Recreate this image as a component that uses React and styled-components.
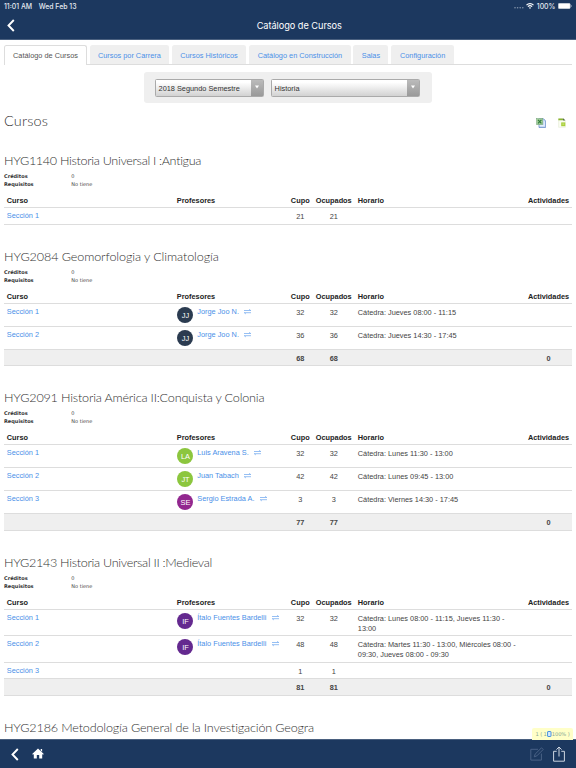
import styled, { createGlobalStyle } from 'styled-components';

const GlobalStyle = createGlobalStyle`
  * {
    box-sizing: border-box;
  }
  body {
    margin: 0;
    background: #fff;
    font-family: 'Liberation Sans', Arial, sans-serif;
    font-size: 7.35px;
    color: #444;
  }
`;

const Page = styled.div`
  width: 576px;
  height: 768px;
  display: flex;
  flex-direction: column;
  overflow: hidden;
`;

const TopBar = styled.header`
  height: 40px;
  flex: none;
  background: #1c385f;
  border-bottom: 1px solid #4a607f;
  color: #fff;
`;

const StatusBar = styled.div`
  height: 12px;
  padding: 0 4px 0 4px;
  display: flex;
  align-items: center;
  font-family: Inter, sans-serif;
  font-size: 6.9px;
  font-weight: 500;
  color: #e4e9f0;
`;

const StatusDate = styled.span`
  margin-left: 6.5px;
`;

const StatusRight = styled.div`
  margin-left: auto;
  display: flex;
  align-items: center;
  gap: 2.6px;
`;

const TitleBar = styled.div`
  height: 27px;
  display: flex;
  align-items: center;
  padding: 0 0 1px 7px;
`;

const Title = styled.h1`
  flex: 1;
  margin: 0;
  padding-left: 7.6px;
  text-align: center;
  font-family: Inter, sans-serif;
  font-size: 9.2px;
  font-weight: 400;
  letter-spacing: -0.04px;
`;

const Content = styled.main`
  flex: 1;
  min-height: 0;
  overflow: hidden;
  padding: 5px 4px 0;
`;

const Tabs = styled.nav`
  height: 20px;
  display: flex;
  gap: 2.7px;
  border-bottom: 1px solid #ddd;
`;

const Tab = styled.a`
  width: ${props => props.$width}px;
  height: ${props => (props.$active ? 20 : 19)}px;
  flex: none;
  border-radius: 2.5px 2.5px 0 0;
  border: 1px solid ${props => (props.$active ? '#ddd' : '#efefef')};
  border-bottom: 0;
  background: ${props => (props.$active ? '#fff' : '#efefef')};
  color: ${props => (props.$active ? '#555' : '#4a90e8')};
  text-align: center;
  line-height: 19px;
  white-space: nowrap;
`;

const Filters = styled.div`
  width: 288px;
  height: 31px;
  margin: 7px auto 0;
  padding: 0 11px;
  display: flex;
  align-items: center;
  gap: 7px;
  border-radius: 3px;
  background: #efefef;
`;

const Select = styled.div`
  width: ${props => props.$width}px;
  height: 18px;
  display: flex;
  align-items: stretch;
  border: 1px solid #aaa;
  border-radius: 1.5px;
  background: linear-gradient(#fff 15%, #d4d4d4 95%);
  color: #333;
  line-height: 17px;
  padding-left: 2.6px;
`;

const SelectArrow = styled.span`
  width: 12px;
  margin-left: auto;
  display: flex;
  align-items: center;
  justify-content: center;
  padding-bottom: 1px;
  background: linear-gradient(#bbb, #999);
`;

const PageHead = styled.div`
  height: 33px;
  display: flex;
  align-items: center;
  justify-content: space-between;
  padding: 2px 6px 0 0;
`;

const PageTitle = styled.h2`
  margin: 0;
  font-family: Lato, sans-serif;
  font-size: 14.5px;
  font-weight: 300;
  letter-spacing: 0.15px;
  color: #333;
`;

const Exports = styled.div`
  display: flex;
  gap: 12px;
  padding-top: 4px;
`;

const Section = styled.section`
  padding-top: 24.1px;

  &:first-of-type {
    padding-top: 17.1px;
  }
`;

const CourseTitle = styled.h3`
  height: 16px;
  margin: 0 0 2.7px;
  font-family: Lato, sans-serif;
  font-size: 12.6px;
  font-weight: 300;
  line-height: 16px;
  letter-spacing: ${props => props.$spacing}px;
  color: #333;
  white-space: nowrap;
`;

const Meta = styled.dl`
  margin: 0 0 4px;
  display: grid;
  grid-template-columns: 67.3px 1fr;
  font-family: 'DejaVu Sans', sans-serif;
  font-size: 5px;
  line-height: 8px;

  dt {
    font-weight: 700;
    color: #333;
  }
  dd {
    margin: 0;
  }
`;

const Row = styled.div`
  height: ${props => props.$height}px;
  display: grid;
  grid-template-columns: 170px 114px 24.5px 42.5px 170px 47px;
  border-bottom: 1px solid #ddd;
  background: ${props => (props.$total ? '#efefef' : 'transparent')};
  color: ${props => (props.$head ? '#222' : '#444')};
  font-weight: ${props => (props.$head || props.$total ? 700 : 400)};
  line-height: 10px;
`;

const Cell = styled.div`
  padding: ${props => props.$top ?? 4}px 2.8px 0;
  text-align: ${props => (props.$center ? 'center' : 'left')};
  white-space: nowrap;
`;

const NumCell = styled(Cell)`
  padding-left: 0;
  padding-right: 0;
`;

const Link = styled.a`
  color: #4a90e8;
`;

const Teacher = styled.div`
  display: flex;
  align-items: flex-start;
  gap: 3.8px;
  padding-left: 0.7px;

  svg {
    margin: 2px 0 0 1.7px;
  }
`;

const Avatar = styled.span`
  width: 16px;
  height: 16px;
  border-radius: 50%;
  background: ${props => props.$color};
  color: #fff;
  font-size: 7.4px;
  line-height: 17px;
  text-align: center;
`;

const BottomBar = styled.footer`
  position: relative;
  height: 29px;
  flex: none;
  padding: 0 11px 0 11px;
  display: flex;
  align-items: center;
  background: #1c385f;
  border-top: 1px solid #4a607f;
`;

const HomeLink = styled.a`
  display: flex;
  margin: 0 0 1px 12.5px;
`;

const Tools = styled.div`
  margin-left: auto;
  display: flex;
  align-items: center;
  gap: 9px;
`;

const DebugTag = styled.div`
  position: absolute;
  right: 3px;
  bottom: 28px;
  width: 41px;
  height: 12px;
  display: flex;
  align-items: center;
  justify-content: center;
  border-radius: 2px 2px 0 0;
  background: #ffffc8;
  color: #86a795;
  font-family: 'DejaVu Sans', sans-serif;
  font-size: 5.2px;
  letter-spacing: -0.12px;
  white-space: pre;
`;

const Chevron = ({ width = 8, height = 13 }) => (
  <svg width={width} height={height} viewBox="0 0 8 13">
    <path d="M6.8 1 1.5 6.5 6.8 12" fill="none" stroke="#fff" strokeWidth="1.9" />
  </svg>
);

const SwapIcon = () => (
  <svg width="7" height="6" viewBox="0 0 7 6">
    <path
      d="M0 1.5h6.8M5.2.3l1.5 1.2M7 3.7H.2M1.8 4.9.3 3.7"
      fill="none"
      stroke="#5c9cec"
      strokeWidth="0.65"
    />
  </svg>
);

const DownArrow = () => (
  <svg width="4" height="4" viewBox="0 0 4 4">
    <path d="M0 .4h4L2 3.6z" fill="#fff" />
  </svg>
);

const WifiIcon = () => (
  <svg width="8" height="6" viewBox="0 0 8 6">
    <path
      d="M.5 2.1a5 5 0 0 1 7 0M1.9 3.6a3 3 0 0 1 4.2 0"
      fill="none"
      stroke="#fff"
      strokeWidth="1.2"
    />
    <path d="M4 6 2.9 4.7a1.6 1.6 0 0 1 2.2 0z" fill="#fff" />
  </svg>
);

const BatteryIcon = () => (
  <svg width="14" height="6" viewBox="0 0 14 6">
    <rect x="0.3" y="0.3" width="11.9" height="5.4" rx="1.2" fill="#fff" stroke="#b9c4d2" strokeWidth="0.6" />
    <path d="M12.9 2v2q.9-.3.9-1t-.9-1z" fill="#b9c4d2" />
  </svg>
);

const DotsIcon = () => (
  <svg width="10" height="6" viewBox="0 0 10 6">
    <g fill="#8595ac">
      <circle cx="1" cy="4.8" r="0.8" />
      <circle cx="3.6" cy="4.8" r="0.8" />
      <circle cx="6.2" cy="4.8" r="0.8" />
      <circle cx="8.8" cy="4.8" r="0.8" />
    </g>
  </svg>
);

const ExcelIcon = () => (
  <svg width="10" height="10" viewBox="0 0 10 10">
    <path d="M3 .9h4.8L9.6 3v6.5H3z" fill="#c5d9f5" stroke="#5c83c4" strokeWidth="0.7" />
    <path d="M3.5 7.6h4.8V3.3" fill="none" stroke="#eef5ff" strokeWidth="0.8" />
    <rect x="0.6" y="0.6" width="6.2" height="6" fill="#a5cf9b" stroke="#6a9d70" strokeWidth="0.5" />
    <path d="m2 1.9 3.4 3.5M5.4 1.9 2 5.4" stroke="#2f7a3c" strokeWidth="1.2" />
  </svg>
);

const CsvIcon = () => (
  <svg width="8" height="10" viewBox="0 0 8 10">
    <path d="M.6.8h4.9l1.8 1.9v6.6H.6z" fill="#fafcf2" stroke="#e1e8ce" strokeWidth="0.5" />
    <path d="M.4.5h4L5.6 2.2H.4z" fill="#8bb52f" />
    <path d="M4.6.5h.9l1.9 1.9H5.2z" fill="#566b4b" />
    <rect x="3.2" y="4.4" width="4.1" height="3.8" fill="#a8cf38" />
    <path d="M4.3 5.3h2v1.8h-2z" fill="#bfdc6a" />
  </svg>
);

const HomeIcon = () => (
  <svg width="12" height="11" viewBox="0 0 12 11">
    <path d="M6 .4 11.8 6l-.8.8-.8-.7v4.5H7.2V7.1H4.8v3.5H1.8V6.1L1 6.8.2 6 6 .4z" fill="#fff" />
    <path d="M8.7 1h1.4v2.8L8.7 2.5z" fill="#fff" />
  </svg>
);

const EditIcon = () => (
  <svg width="14" height="14" viewBox="0 0 14 14">
    <path
      d="M8 2.3H.8v10.8h10.6V6.6M4.3 9.8l.8-2.6L11.5.8l1.7 1.7-6.4 6.4z"
      fill="none"
      stroke="#4f668a"
      strokeWidth="0.9"
    />
  </svg>
);

const ShareIcon = () => (
  <svg width="12" height="16" viewBox="0 0 12 16">
    <path
      d="M3.7 5.3H.6v9.9h10.8V5.3H8.3M6 10.5V1.2M3.4 3.6 6 1l2.6 2.6"
      fill="none"
      stroke="#ced6e1"
      strokeWidth="1"
    />
  </svg>
);

const PhoneIcon = () => (
  <svg width="5" height="6" viewBox="0 0 5 6">
    <rect x="0.6" y="0.5" width="3.4" height="5" rx="0.5" fill="#d7ecff" stroke="#3686dc" strokeWidth="0.9" />
  </svg>
);

const tabs = [
  { label: 'Catálogo de Cursos', width: 83, active: true },
  { label: 'Cursos por Carrera', width: 79.3 },
  { label: 'Cursos Históricos', width: 74.7 },
  { label: 'Catálogo en Construcción', width: 101.7 },
  { label: 'Salas', width: 35 },
  { label: 'Configuración', width: 63 },
];

const jorge = { initials: 'JJ', name: 'Jorge Joo N.', color: '#2b3b50' };
const italo = { initials: 'IF', name: 'Ítalo Fuentes Bardelli', color: '#64298f' };

const courses = [
  {
    title: 'HYG1140 Historia Universal I :Antigua',
    spacing: -0.32,
    rows: [{ name: 'Sección 1', seats: 21, height: 16.6 }],
  },
  {
    title: 'HYG2084 Geomorfologia y Climatología',
    spacing: -0.1,
    rows: [
      { name: 'Sección 1', teacher: jorge, seats: 32, schedule: ['Cátedra: Jueves 08:00 - 11:15'], height: 22.9 },
      { name: 'Sección 2', teacher: jorge, seats: 36, schedule: ['Cátedra: Jueves 14:30 - 17:45'], height: 22.9 },
    ],
    total: 68,
  },
  {
    title: 'HYG2091 Historia América II:Conquista y Colonia',
    spacing: -0.19,
    rows: [
      {
        name: 'Sección 1',
        teacher: { initials: 'LA', name: 'Luis Aravena S.', color: '#8cc63e' },
        seats: 32,
        schedule: ['Cátedra: Lunes 11:30 - 13:00'],
        height: 22.9,
      },
      {
        name: 'Sección 2',
        teacher: { initials: 'JT', name: 'Juan Tabach', color: '#8cc63e' },
        seats: 42,
        schedule: ['Cátedra: Lunes 09:45 - 13:00'],
        height: 22.9,
      },
      {
        name: 'Sección 3',
        teacher: { initials: 'SE', name: 'Sergio Estrada A.', color: '#92278f' },
        seats: 3,
        schedule: ['Cátedra: Viernes 14:30 - 17:45'],
        height: 22.9,
      },
    ],
    total: 77,
  },
  {
    title: 'HYG2143 Historia Universal II :Medieval',
    spacing: -0.3,
    rows: [
      {
        name: 'Sección 1',
        teacher: italo,
        seats: 32,
        schedule: ['Cátedra: Lunes 08:00 - 11:15, Jueves 11:30 -', '13:00'],
        height: 26.4,
      },
      {
        name: 'Sección 2',
        teacher: italo,
        seats: 48,
        schedule: ['Cátedra: Martes 11:30 - 13:00, Miércoles 08:00 -', '09:30, Jueves 08:00 - 09:30'],
        height: 26.4,
      },
      { name: 'Sección 3', seats: 1, height: 16.4 },
    ],
    total: 81,
  },
  { title: 'HYG2186 Metodología General de la Investigación Geogra', spacing: -0.16 },
];

const Course = ({ course }) => (
  <Section>
    <CourseTitle $spacing={course.spacing}>{course.title}</CourseTitle>
    {course.rows && (
      <>
        <Meta>
          <dt>Créditos</dt>
          <dd>0</dd>
          <dt>Requisitos</dt>
          <dd>No tiene</dd>
        </Meta>
        <Row $head $height={16.4}>
          <Cell>Curso</Cell>
          <Cell>Profesores</Cell>
          <NumCell $center>Cupo</NumCell>
          <NumCell $center>Ocupados</NumCell>
          <Cell>Horario</Cell>
          <NumCell $center>Actividades</NumCell>
        </Row>
        {course.rows.map(row => (
          <Row key={row.name} $height={row.height}>
            <Cell $top={3}>
              <Link>{row.name}</Link>
            </Cell>
            <Cell $top={3}>
              {row.teacher && (
                <Teacher>
                  <Avatar $color={row.teacher.color}>{row.teacher.initials}</Avatar>
                  <Link>{row.teacher.name}</Link>
                  <SwapIcon />
                </Teacher>
              )}
            </Cell>
            <NumCell $center>{row.seats}</NumCell>
            <NumCell $center>{row.seats}</NumCell>
            <Cell>
              {row.schedule?.map(line => (
                <div key={line}>{line}</div>
              ))}
            </Cell>
            <Cell />
          </Row>
        ))}
        {course.total && (
          <Row $total $height={16.6}>
            <Cell />
            <Cell />
            <NumCell $center>{course.total}</NumCell>
            <NumCell $center>{course.total}</NumCell>
            <Cell />
            <NumCell $center>0</NumCell>
          </Row>
        )}
      </>
    )}
  </Section>
);

const App = () => {
  return (
    <Page>
      <GlobalStyle />
      <TopBar>
        <StatusBar>
          <span>11:01 AM</span>
          <StatusDate>Wed Feb 13</StatusDate>
          <StatusRight>
            <DotsIcon />
            <WifiIcon />
            <span>100%</span>
            <BatteryIcon />
          </StatusRight>
        </StatusBar>
        <TitleBar>
          <Chevron />
          <Title>Catálogo de Cursos</Title>
        </TitleBar>
      </TopBar>

      <Content>
        <Tabs>
          {tabs.map(tab => (
            <Tab key={tab.label} $width={tab.width} $active={tab.active}>
              {tab.label}
            </Tab>
          ))}
        </Tabs>

        <Filters>
          <Select $width={109}>
            2018 Segundo Semestre
            <SelectArrow>
              <DownArrow />
            </SelectArrow>
          </Select>
          <Select $width={149}>
            Historia
            <SelectArrow>
              <DownArrow />
            </SelectArrow>
          </Select>
        </Filters>

        <PageHead>
          <PageTitle>Cursos</PageTitle>
          <Exports>
            <ExcelIcon />
            <CsvIcon />
          </Exports>
        </PageHead>

        {courses.map(course => (
          <Course key={course.title} course={course} />
        ))}
      </Content>

      <BottomBar>
        <Chevron />
        <HomeLink>
          <HomeIcon />
        </HomeLink>
        <Tools>
          <EditIcon />
          <ShareIcon />
        </Tools>
        <DebugTag>
          1 ( 1
          <PhoneIcon />
          {'100% )'}
        </DebugTag>
      </BottomBar>
    </Page>
  );
};

export default App;
